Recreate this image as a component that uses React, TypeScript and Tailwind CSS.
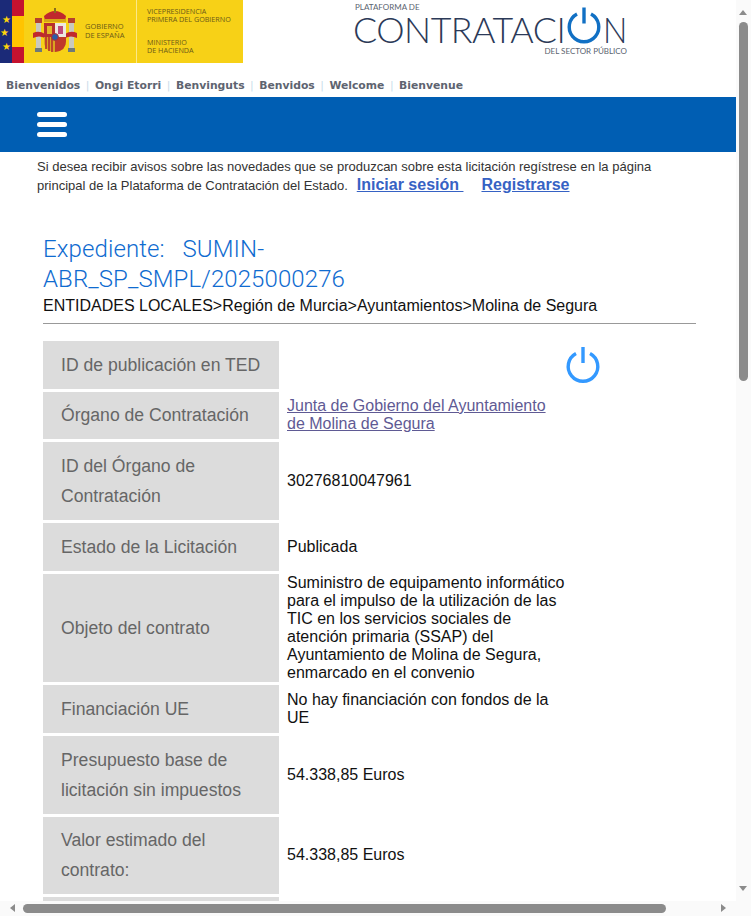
import React from "react";

const rows: { label: string[]; value?: React.ReactNode; h: string; pad?: string; icon?: boolean }[] = [
  { label: ["ID de publicación en TED"], h: "h-[48px]", icon: true },
  {
    label: ["Órgano de Contratación"],
    h: "h-[47px]",
    pad: "pb-[2px]",
    value: (
      <a className="text-[#5f5a94] underline" href="#">
        Junta de Gobierno del Ayuntamiento
        <br />
        de Molina de Segura
      </a>
    ),
  },
  { label: ["ID del Órgano de", "Contratación"], h: "h-[78px]", value: "30276810047961" },
  { label: ["Estado de la Licitación"], h: "h-[48px]", value: "Publicada" },
  {
    label: ["Objeto del contrato"],
    h: "h-[108px]",
    value: (
      <>
        Suministro de equipamento informático
        <br />
        para el impulso de la utilización de las
        <br />
        TIC en los servicios sociales de
        <br />
        atención primaria (SSAP) del
        <br />
        Ayuntamiento de Molina de Segura,
        <br />
        enmarcado en el convenio
      </>
    ),
  },
  {
    label: ["Financiación UE"],
    h: "h-[48px]",
    value: (
      <>
        No hay financiación con fondos de la
        <br />
        UE
      </>
    ),
  },
  { label: ["Presupuesto base de", "licitación sin impuestos"], h: "h-[78px]", value: "54.338,85 Euros" },
  { label: ["Valor estimado del", "contrato:"], h: "h-[77px]", pad: "pb-[2px]", value: "54.338,85 Euros" },
  { label: [""], h: "h-[48px]" },
];

function Power({ className, color }: { className: string; color: string }) {
  return (
    <svg viewBox="0 0 36 36" className={className} fill="none" stroke={color}>
      <path d="M11 6.46 A14.8 14.8 0 1 0 25 6.46" strokeWidth="3.4" />
      <path d="M18 0 V16" strokeWidth="3.4" />
    </svg>
  );
}

function Crest() {
  return (
    <svg viewBox="0 0 44 48" className="w-[44px] h-[48px]">
      <rect x="3" y="14" width="5" height="28" fill="#c9c9c0" />
      <rect x="36" y="14" width="5" height="28" fill="#c9c9c0" />
      <rect x="2" y="10" width="7" height="5" fill="#b5402f" />
      <rect x="35" y="10" width="7" height="5" fill="#b5402f" />
      <rect x="2" y="40" width="7" height="4" fill="#6f7a78" />
      <rect x="35" y="40" width="7" height="4" fill="#6f7a78" />
      <path d="M0 25 Q6 22 12 26 L12 30 Q6 27 0 30Z" fill="#c0282d" />
      <path d="M44 25 Q38 22 32 26 L32 30 Q38 27 44 30Z" fill="#c0282d" />
      <path d="M11 8 Q22 -2 33 8 L32 13 H12Z" fill="#c0282d" />
      <rect x="11" y="11" width="22" height="3" fill="#d6a516" />
      <rect x="21" y="0" width="2" height="5" fill="#8a6d1c" />
      <path d="M11 15 H33 V33 Q33 43 22 44 Q11 43 11 33Z" fill="#c8a22c" />
      <rect x="11" y="15" width="11" height="14" fill="#b8302c" />
      <rect x="22" y="15" width="11" height="14" fill="#ece8e0" />
      <path d="M25 18 L30 18 L30 26 L25 26Z" fill="#c04a7a" />
      <rect x="14" y="18" width="5" height="8" fill="#e2b72a" />
      <path d="M11 29 H22 V44 Q11 43 11 33Z" fill="#d9a520" />
      <path d="M13 29 V41 M16 29 V43 M19 29 V44" stroke="#b8302c" strokeWidth="1.6" />
      <path d="M22 29 H33 V33 Q33 43 22 44Z" fill="#c0392b" />
      <circle cx="22" cy="29" r="3.4" fill="#2a5da8" stroke="#b8302c" />
    </svg>
  );
}

function Star({ className }: { className: string }) {
  return <span className={"absolute text-[10px] leading-none text-[#ffd60a] " + className}>★</span>;
}

function GovLogo() {
  return (
    <div className="flex w-[243px] h-[63px] bg-[#f7d117] font-['Open_Sans',sans-serif] text-[#6b5a17]">
      <div className="relative w-[12px] bg-[#1b2a78]">
        <Star className="left-[2px] top-[14px]" />
        <Star className="left-0 top-[27px]" />
        <Star className="left-[2px] top-[41px]" />
      </div>
      <div className="w-[12px] flex flex-col">
        <div className="h-[16px] bg-[#c4122f]" />
        <div className="h-[31px] bg-[#ffc400]" />
        <div className="h-[16px] bg-[#c4122f]" />
      </div>
      <div className="w-[61px] flex items-center justify-start pl-[9px]">
        <Crest />
      </div>
      <div className="w-[51px] pt-[22px] text-[7.5px] leading-[9px] font-medium whitespace-nowrap">
        GOBIERNO
        <br />
        DE ESPAÑA
      </div>
      <div className="w-[1px] bg-[#fbe88a]" />
      <div className="pl-[10px] pt-[7px] text-[7.2px] leading-[8px] font-medium whitespace-nowrap">
        VICEPRESIDENCIA
        <br />
        PRIMERA DEL GOBIERNO
        <div className="mt-[15px]">
          MINISTERIO
          <br />
          DE HACIENDA
        </div>
      </div>
    </div>
  );
}

function ContrataLogo() {
  return (
    <div className="relative w-[272px] h-[63px] ml-[112px] text-[#2c3a58] font-['Lato',sans-serif]">
      <div className="absolute left-0 top-[3px] text-[8px] leading-[9px] text-[#5b6470]">PLATAFORMA DE</div>
      <div className="absolute -left-[2px] top-[9px] flex items-center text-[35.8px] leading-[42px] font-light whitespace-nowrap tracking-[-0.5px]">
        <span>CONTRATACI</span>
        <Power className="w-[36px] h-[39px] ml-[1px] mr-[1px] -mt-[10px]" color="#1170c4" />
        <span className="inline-block scale-x-90 origin-left">N</span>
      </div>
      <div className="absolute right-0 top-[47px] text-[8px] leading-[9px] text-[#5b6470]">DEL SECTOR PÚBLICO</div>
    </div>
  );
}

const langs = ["Bienvenidos", "Ongi Etorri", "Benvinguts", "Benvidos", "Welcome", "Bienvenue"];

export default function App() {
  return (
    <div className="relative w-[751px] h-[916px] overflow-hidden bg-white font-['Liberation_Sans',sans-serif]">
      <div className="w-[736px]">
        <header className="flex h-[63px]">
          <GovLogo />
          <ContrataLogo />
        </header>

        <nav className="flex items-center h-[34px] pl-[6px] pt-[13px] font-['DejaVu_Sans',sans-serif] font-bold text-[10.8px] text-[#5e6470] whitespace-nowrap">
          {langs.map((l, i) => (
            <React.Fragment key={l}>
              {i > 0 && <span className="mx-[5.5px] font-normal text-[#c9dcea]">|</span>}
              <span>{l}</span>
            </React.Fragment>
          ))}
        </nav>

        <div className="h-[55px] bg-[#005eb3] pl-[37px] flex flex-col justify-center gap-[5px]">
          <div className="w-[30px] h-[5px] rounded-full bg-white" />
          <div className="w-[30px] h-[5px] rounded-full bg-white" />
          <div className="w-[30px] h-[5px] rounded-full bg-white" />
        </div>

        <div className="pl-[37px] pt-[6px] text-[13px] leading-[18px] text-[#333] whitespace-nowrap">
          <div>Si desea recibir avisos sobre las novedades que se produzcan sobre esta licitación regístrese en la página</div>
          <div className="flex items-baseline">
            <span>principal de la Plataforma de Contratación del Estado.</span>
            <a href="#" className="ml-[9px] text-[16px] font-bold text-[#3662c4] underline whitespace-pre">
              Iniciar sesión{" "}
            </a>
            <a href="#" className="ml-[18px] text-[16px] font-bold text-[#3662c4] underline">
              Registrarse
            </a>
          </div>
        </div>

        <div className="mx-[43px] w-[653px] mt-[39px]">
          <h1 className="font-['Roboto',sans-serif] font-light text-[24px] leading-[30px] tracking-[0.1px] text-[#0f6bd0] w-[400px] whitespace-pre-wrap">
            {"Expediente:   SUMIN-\nABR_SP_SMPL/2025000276"}
          </h1>
          <p className="text-[16px] leading-[22px] mt-[1px] text-[#111]">
            ENTIDADES LOCALES&gt;Región de Murcia&gt;Ayuntamientos&gt;Molina de Segura
          </p>
          <hr className="mt-[6px] border-t border-[#999]" />

          <div className="mt-[17px] flex flex-col gap-[3px]">
            {rows.map((r, i) => (
              <div key={i} className={"flex " + r.h}>
                <div
                  className={
                    "w-[236px] shrink-0 bg-[#dcdcdc] flex flex-col justify-center pl-[18px] text-[17.6px] leading-[30px] text-[#666] " +
                    (r.pad ?? "")
                  }
                >
                  {r.label.map((t, j) => (
                    <div key={j}>{t}</div>
                  ))}
                </div>
                <div
                  className={
                    "pl-[8px] flex items-center text-[16px] leading-[18px] text-[#111] whitespace-nowrap " +
                    (r.pad ?? "")
                  }
                >
                  {r.value}
                  {r.icon && <Power className="ml-[278px] w-[36px] h-[36px]" color="#3399ff" />}
                </div>
              </div>
            ))}
          </div>
        </div>
      </div>

      {/* Scrollbars */}
      <div className="absolute right-0 top-0 bottom-0 w-[15px] bg-[#fafafa]">
        <div className="absolute left-[3px] top-[22px] w-[9px] h-[359px] rounded-full bg-[#8b8b8b]" />
        <div className="absolute left-[3px] top-[10px] w-0 h-0 border-x-[4.5px] border-x-transparent border-b-[5px] border-b-[#8b8b8b]" />
        <div className="absolute left-[3px] bottom-[25px] w-0 h-0 border-x-[4.5px] border-x-transparent border-t-[5px] border-t-[#8b8b8b]" />
      </div>
      <div className="absolute left-0 right-0 bottom-0 h-[15px] bg-[#fafafa]">
        <div className="absolute left-[23px] top-[3px] h-[9px] w-[643px] rounded-full bg-[#8b8b8b]" />
        <div className="absolute left-[10px] top-[3px] w-0 h-0 border-y-[4.5px] border-y-transparent border-r-[5px] border-r-[#8b8b8b]" />
        <div className="absolute right-[25px] top-[3px] w-0 h-0 border-y-[4.5px] border-y-transparent border-l-[5px] border-l-[#8b8b8b]" />
      </div>
    </div>
  );
}
